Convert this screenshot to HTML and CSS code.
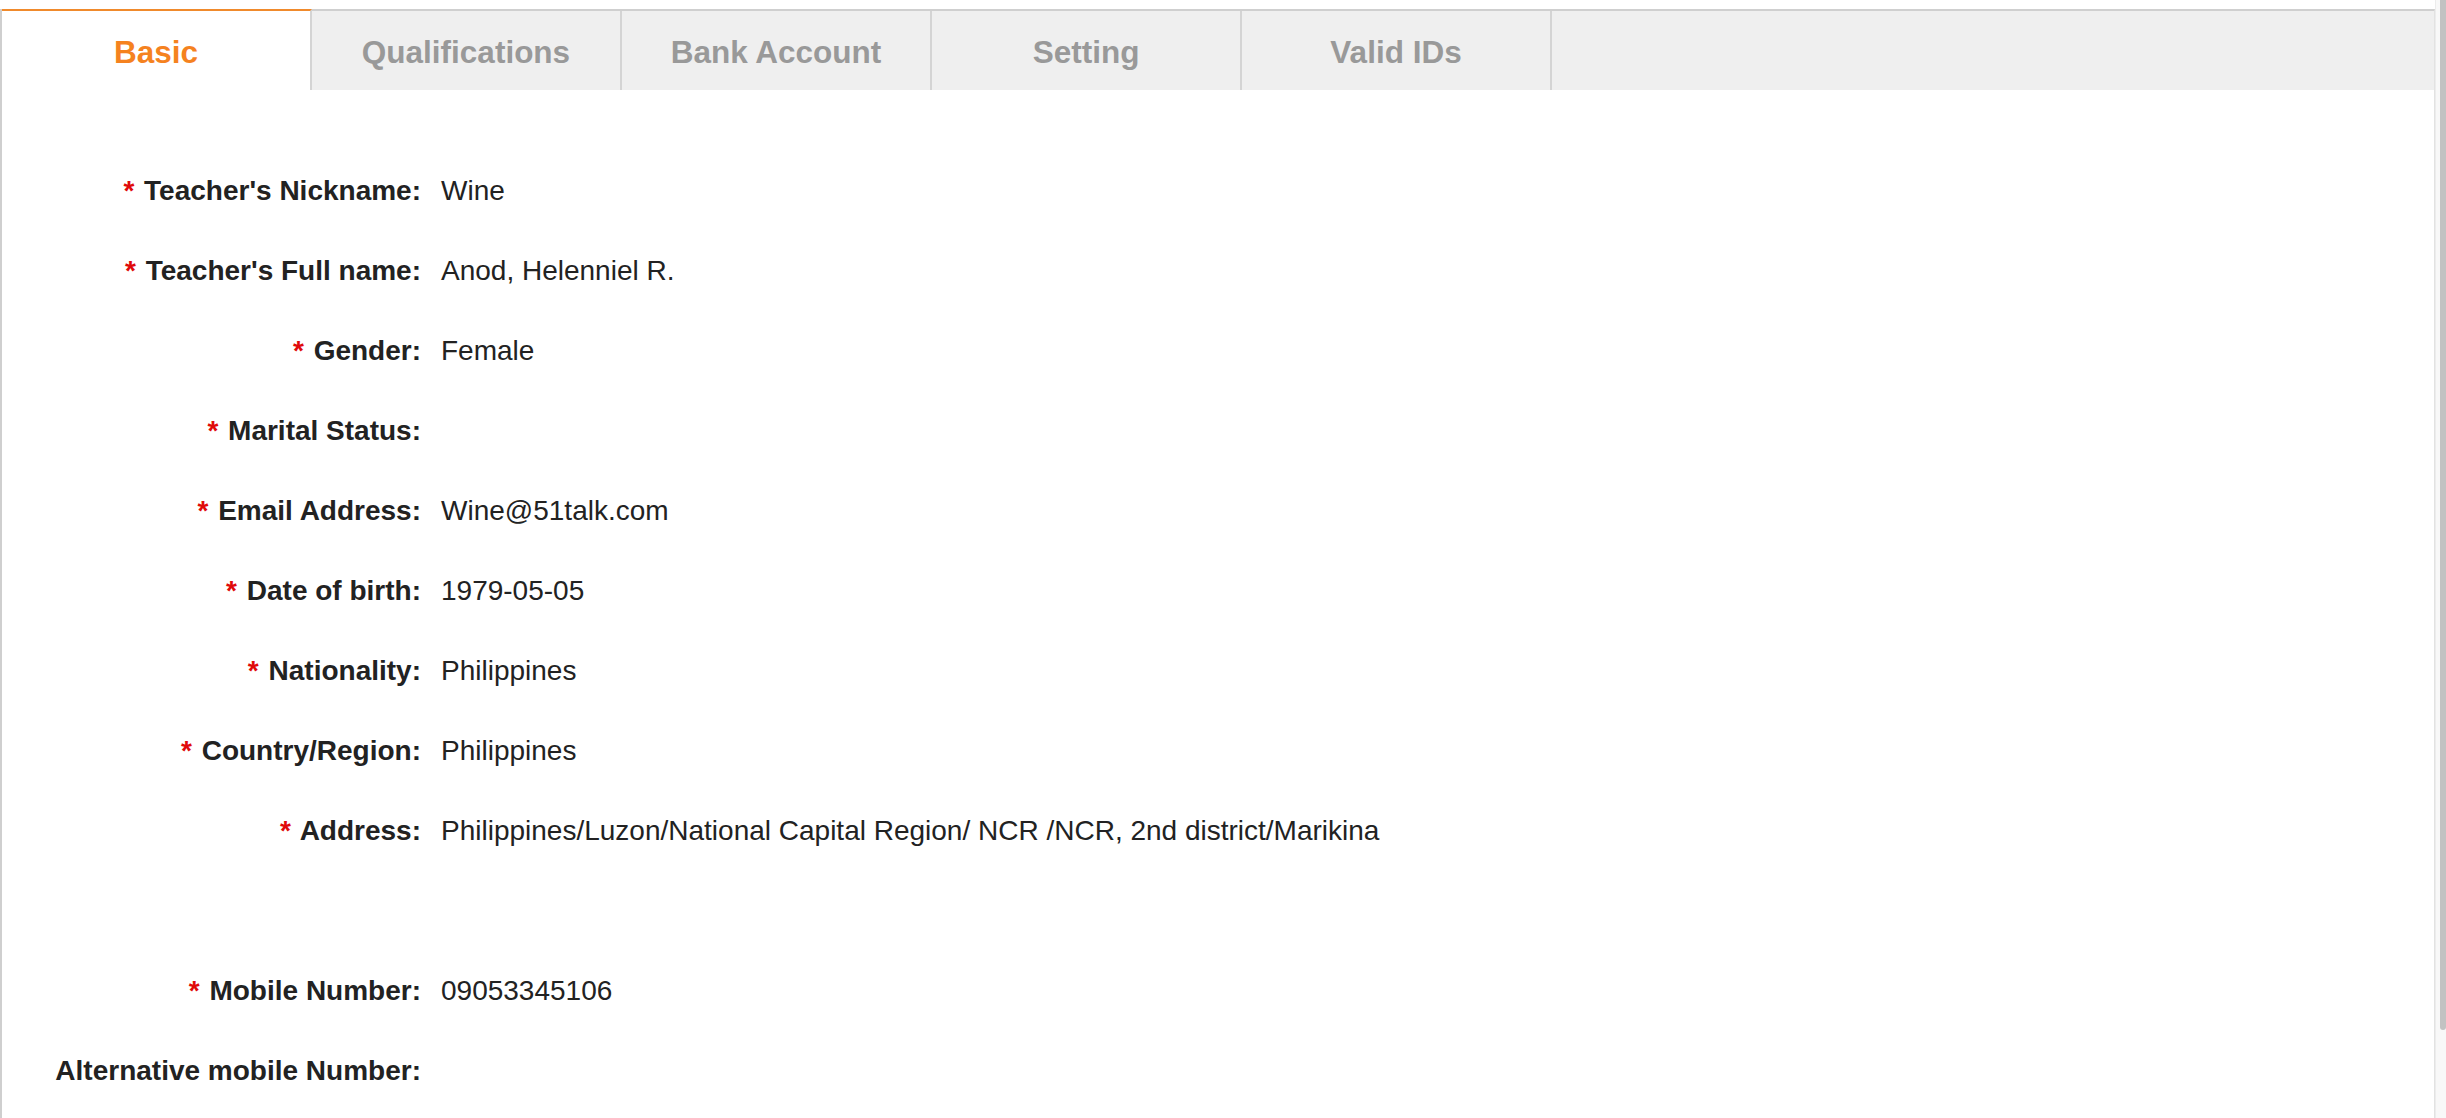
FILE: index.html
```html
<!DOCTYPE html>
<html>
<head>
<meta charset="utf-8">
<link rel="stylesheet" href="styles.css">
</head>
<body>
<div class="page">
  <div class="panel">
    <div class="tabs">
      <div class="tab active">Basic</div>
      <div class="tab">Qualifications</div>
      <div class="tab">Bank Account</div>
      <div class="tab">Setting</div>
      <div class="tab">Valid IDs</div>
      <div class="tab-fill"></div>
    </div>
    <div class="form">
      <div class="row"><div class="label"><span class="req">*</span> Teacher's Nickname:</div><div class="value">Wine</div></div>
      <div class="row"><div class="label"><span class="req">*</span> Teacher's Full name:</div><div class="value">Anod, Helenniel R.</div></div>
      <div class="row"><div class="label"><span class="req">*</span> Gender:</div><div class="value">Female</div></div>
      <div class="row"><div class="label"><span class="req">*</span> Marital Status:</div><div class="value"></div></div>
      <div class="row"><div class="label"><span class="req">*</span> Email Address:</div><div class="value">Wine@51talk.com</div></div>
      <div class="row"><div class="label"><span class="req">*</span> Date of birth:</div><div class="value">1979-05-05</div></div>
      <div class="row"><div class="label"><span class="req">*</span> Nationality:</div><div class="value">Philippines</div></div>
      <div class="row"><div class="label"><span class="req">*</span> Country/Region:</div><div class="value">Philippines</div></div>
      <div class="row"><div class="label"><span class="req">*</span> Address:</div><div class="value">Philippines/Luzon/National Capital Region/ NCR /NCR, 2nd district/Marikina</div></div>
      <div class="row"><div class="label"></div><div class="value"></div></div>
      <div class="row"><div class="label"><span class="req">*</span> Mobile Number:</div><div class="value">09053345106</div></div>
      <div class="row"><div class="label">Alternative mobile Number:</div><div class="value"></div></div>
    </div>
  </div>
  <div class="scrollbar"><div class="thumb"></div></div>
</div>
</body>
</html>
```
FILE: styles.css
```css
html, body {
  margin: 0;
  padding: 0;
  background: #fff;
  height: 100%;
  overflow: hidden;
}
body {
  font-family: "Liberation Sans", Arial, sans-serif;
  color: #222;
}
.page {
  display: flex;
  height: 1118px;
}
.panel {
  width: 2435px;
  margin-top: 9px;
  border-top: 2px solid #cfcfcf;
  border-left: 2px solid #cfcfcf;
  border-right: 1px solid #e2e2e2;
  box-sizing: border-box;
  background: #fff;
}
.tabs {
  display: flex;
  height: 79px;
  background: #efefef;
}
.tab {
  width: 310px;
  box-sizing: border-box;
  border-right: 2px solid #d4d4d4;
  display: flex;
  align-items: center;
  justify-content: center;
  padding-top: 3px;
  font-weight: bold;
  font-size: 31.5px;
  color: #999;
}
.tab.active {
  background: #fff;
  color: #f5821f;
  margin-top: -2px;
  border-top: 2px solid #f08a2c;
}
.tab-fill {
  flex: 1;
}
.form {
  padding-top: 61px;
}
.row {
  display: flex;
  height: 80px;
  align-items: center;
  font-size: 28px;
}
.label {
  width: 419px;
  text-align: right;
  font-weight: bold;
  color: #222;
  white-space: nowrap;
}
.req {
  color: #e00a0a;
  margin-right: 2px;
}
.value {
  padding-left: 20px;
  color: #222;
  white-space: nowrap;
}
.scrollbar {
  flex: 1;
  background: #f8f8f8;
  border-left: 1px solid #ececec;
  display: flex;
  justify-content: flex-end;
}
.thumb {
  width: 6px;
  height: 1030px;
  background: #c2c2c2;
  border-radius: 0 0 3px 3px;
}
```
